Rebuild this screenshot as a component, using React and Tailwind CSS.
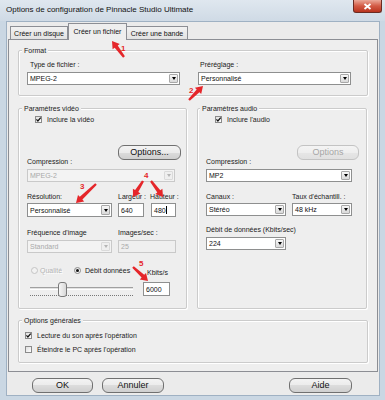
import React from "react";

function Select({ className = "", text, disabled }) {
  return (
    <div
      className={
        "flex items-stretch border " +
        (disabled ? "border-[#c9c9c9] bg-[#f3f3f3] " : "border-[#8e8f8f] bg-white ") +
        className
      }
    >
      <span
        className={
          "flex flex-1 items-center pl-[2px] text-[7px] leading-none " +
          (disabled ? "text-[#a9a9a9]" : "text-[#111]")
        }
      >
        {text}
      </span>
      <span
        className={
          "m-[1px] flex w-[9px] items-center justify-center rounded-[1px] border " +
          (disabled ? "border-[#dadada] bg-[#efefef]" : "border-[#a8a8a8] bg-[linear-gradient(#f7f7f7,#d9d9d9)]")
        }
      >
        <span
          className={
            "h-0 w-0 border-l-[2.5px] border-r-[2.5px] border-t-[3px] border-l-transparent border-r-transparent " +
            (disabled ? "border-t-[#b5b5b5]" : "border-t-black")
          }
        />
      </span>
    </div>
  );
}

function Input({ className = "", text, disabled, caret }) {
  return (
    <div
      className={
        "flex items-center border pl-[2px] text-[7px] leading-none " +
        (disabled ? "border-[#c9c9c9] bg-[#efefef] text-[#a9a9a9] " : "border-[#8e8f8f] bg-white text-[#111] ") +
        className
      }
    >
      {text}
      {caret && <span className="ml-[0.5px] h-[8px] w-[1px] bg-black" />}
    </div>
  );
}

function Check({ checked }) {
  return (
    <span className="flex h-[7px] w-[7px] shrink-0 items-center justify-center border border-[#8a8a8a] bg-[linear-gradient(135deg,#dedede,#ffffff)]">
      {checked && (
        <svg width="5" height="5" viewBox="0 0 5 5">
          <path d="M0.4 2.4 L1.9 4 L4.7 0.6" fill="none" stroke="#111" strokeWidth="1.2" />
        </svg>
      )}
    </span>
  );
}

function Radio({ checked, disabled }) {
  return (
    <span
      className={
        "flex h-[7px] w-[7px] shrink-0 items-center justify-center rounded-full border " +
        (disabled ? "border-[#c4c4c4] bg-[#f2f2f2]" : "border-[#8a8a8a] bg-[linear-gradient(135deg,#dedede,#ffffff)]")
      }
    >
      {checked && <span className="h-[3px] w-[3px] rounded-full bg-[#111]" />}
    </span>
  );
}

function Button({ className = "", children, disabled }) {
  return (
    <div
      className={
        "flex h-[15px] items-center justify-center rounded-[6px] border text-[9px] leading-none " +
        (disabled
          ? "border-[#c3c3c3] bg-[linear-gradient(#f4f4f4,#eeeeee_50%,#e6e6e6_50%,#e0e0e0)] text-[#a6a6a6] "
          : "border-[#707070] bg-[linear-gradient(#f3f3f3,#ebebeb_50%,#dcdcdc_50%,#cfcfcf)] text-[#111] ") +
        className
      }
    >
      {children}
    </div>
  );
}

function Legend({ className = "", children }) {
  return (
    <span className={"absolute -top-[5px] bg-[#eeeeee] px-[2px] text-[7px] leading-[9px] text-[#222] " + className}>
      {children}
    </span>
  );
}

const group =
  "relative rounded-[2px] border border-[#cbcbcb] shadow-[inset_1px_1px_0_#ffffff,1px_1px_0_#ffffff]";
const lbl = "text-[7px] leading-[9px] text-[#1a1a1a] whitespace-nowrap";

function arrowPts(x1, y1, x2, y2, sw = 3.8, hl = 7, hw = 9) {
  const dx = x2 - x1;
  const dy = y2 - y1;
  const L = Math.hypot(dx, dy);
  const ux = dx / L;
  const uy = dy / L;
  const px = -uy;
  const py = ux;
  const bx = x2 - ux * hl;
  const by = y2 - uy * hl;
  const pts = [
    [x1 + (px * sw * 0.6) / 2, y1 + (py * sw * 0.6) / 2],
    [bx + (px * sw) / 2, by + (py * sw) / 2],
    [bx + (px * hw) / 2, by + (py * hw) / 2],
    [x2, y2],
    [bx - (px * hw) / 2, by - (py * hw) / 2],
    [bx - (px * sw) / 2, by - (py * sw) / 2],
    [x1 - (px * sw * 0.6) / 2, y1 - (py * sw * 0.6) / 2],
  ];
  return pts.map((p) => p[0].toFixed(1) + "," + p[1].toFixed(1)).join(" ");
}

const arrows = [
  [124, 57, 112, 41],
  [189, 100, 203, 86],
  [96, 184, 76, 203],
  [143, 181, 133, 197],
  [151, 181, 163, 197],
  [133, 267, 148, 281],
];
const nums = [
  ["1", 121, 51],
  ["2", 189, 93],
  ["3", 80, 189],
  ["4", 144, 178],
  ["5", 139, 266],
];

export default function App() {
  return (
    <div className="relative h-[400px] w-[385px] overflow-hidden bg-[#cad7e3] font-['Liberation_Sans',Arial,sans-serif] text-[#111]">
      {/* title bar */}
      <div className="flex h-[21px] items-start justify-between bg-[linear-gradient(#dfe7ef,#cfdae5)]">
        <span className="pl-[6px] pt-[5px] text-[8px] leading-[10px] text-[#111]">
          Options de configuration de Pinnacle Studio Ultimate
        </span>
        <div className="mr-[3px] flex h-[13px] w-[29px] items-center justify-center rounded-b-[3px] border border-t-0 border-[#6b2b22] bg-[linear-gradient(#eba898,#d35a44_50%,#b9341f)]">
          <svg width="9" height="7" viewBox="0 0 9 7">
            <path d="M1.5 1 L7.5 6 M7.5 1 L1.5 6" stroke="white" strokeWidth="1.8" />
          </svg>
        </div>
      </div>

      {/* client */}
      <div className="ml-[6px] h-[375px] w-[374px] border border-[#9fb1c3] bg-[#ebebeb] px-[1px]">
        {/* tabs */}
        <div className="flex h-[17px] items-end pl-[2px]">
          <div className="flex h-[13px] w-[58px] items-center justify-center border border-b-0 border-[#8c8e94] bg-[linear-gradient(#f2f2f2,#e2e2e2)] text-[7px] leading-none">
            Créer un disque
          </div>
          <div className="relative z-10 -mb-[1px] flex h-[17px] w-[59px] items-start justify-center border border-b-0 border-[#8c8e94] bg-[#eeeeee] pt-[4px] text-[7px] leading-none">
            Créer un fichier
          </div>
          <div className="flex h-[13px] w-[61px] items-center justify-center border border-b-0 border-l-0 border-[#8c8e94] bg-[linear-gradient(#f2f2f2,#e2e2e2)] text-[7px] leading-none">
            Créer une bande
          </div>
        </div>

        {/* panel */}
        <div className="h-[333px] w-[370px] border border-[#8c8e94] bg-[#eeeeee] pl-[9px] pt-[10px]">
          {/* Format */}
          <div className={group + " h-[46px] w-[350px]"}>
            <Legend className="left-[3px]">Format</Legend>
            <div className="flex pl-[8px] pt-[9px]">
              <div className="w-[153px]">
                <div className={lbl + " pl-[3px]"}>Type de fichier :</div>
                <Select className="mt-[3px] h-[13px] w-[153px]" text="MPEG-2" />
              </div>
              <div className="ml-[18px] w-[153px]">
                <div className={lbl + " pl-[2px]"}>Préréglage :</div>
                <Select className="mt-[3px] h-[13px] w-[153px]" text="Personnalisé" />
              </div>
            </div>
          </div>

          {/* video / audio */}
          <div className="mt-[12px] flex gap-[10px]">
            {/* video */}
            <div className={group + " h-[201px] w-[169px]"}>
              <Legend className="left-[3px]">Paramètres vidéo</Legend>
              <div className="flex h-[9px] items-center pl-[16px] mt-[6px]">
                <Check checked />
                <span className={lbl + " ml-[5px]"}>Inclure la vidéo</span>
              </div>
              <div className="mt-[21px] flex items-start justify-between">
                <span className={lbl + " ml-[8px] mt-[12px]"}>Compression :</span>
                <Button className="mr-[5px] w-[63px]">Options...</Button>
              </div>
              <Select className="ml-[8px] mt-[3px] h-[13px] w-[148px]" text="MPEG-2" disabled />

              <div className="mt-[10px] flex pl-[8px]">
                <span className={lbl + " w-[91px]"}>Résolution:</span>
                <span className={lbl + " w-[32px]"}>Largeur :</span>
                <span className={lbl}>Hauteur :</span>
              </div>
              <div className="mt-[2px] flex pl-[8px]">
                <Select className="h-[14px] w-[85px]" text="Personnalisé" />
                <Input className="ml-[6px] h-[14px] w-[26px]" text="640" />
                <Input className="ml-[7px] h-[14px] w-[25px]" text="480" caret />
              </div>

              <div className="mt-[11px] flex pl-[8px]">
                <span className={lbl + " w-[91px]"}>Fréquence d'image</span>
                <span className={lbl}>Images/sec :</span>
              </div>
              <div className="mt-[3px] flex pl-[8px]">
                <Select className="h-[13px] w-[85px]" text="Standard" disabled />
                <Input className="ml-[6px] h-[13px] w-[58px]" text="25" disabled />
              </div>

              <div className="mt-[13px] flex items-start pl-[12px]">
                <span className="flex h-[9px] items-center">
                  <Radio disabled />
                </span>
                <span className={lbl + " ml-[2px] w-[34px] text-[#b4b4b4] [text-shadow:1px_1px_0_#ffffff]"}>Qualité</span>
                <span className="flex h-[9px] items-center">
                  <Radio checked />
                </span>
                <span className={lbl + " ml-[4px] w-[62px]"}>Débit données</span>
                <span className={lbl + " mt-[2px]"}>Kbits/s</span>
              </div>

              <div className="mt-[5px] flex items-start pl-[11px]">
                <div className="relative h-[15px] w-[103px]">
                  <div className="mt-[5px] h-[3px] border-b border-t border-b-white border-t-[#a0a0a0] bg-[#e2e2e2]" />
                  <div className="mt-[5px] h-0 border-t border-dotted border-[#777777]" />
                  <div className="absolute left-[28px] top-0 h-[15px] w-[9px] rounded-[3px] border border-[#7a7a7a] bg-[linear-gradient(90deg,#f6f6f6,#d8d8d8)]" />
                </div>
                <Input className="ml-[10px] h-[14px] w-[27px]" text="6000" />
              </div>
            </div>

            {/* audio */}
            <div className={group + " h-[201px] w-[170px]"}>
              <Legend className="left-[2px]">Paramètres audio</Legend>
              <div className="mt-[6px] flex h-[9px] items-center pl-[17px]">
                <Check checked />
                <span className={lbl + " ml-[5px]"}>Inclure l'audio</span>
              </div>
              <div className="mt-[21px] flex items-start justify-between">
                <span className={lbl + " ml-[8px] mt-[12px]"}>Compression :</span>
                <Button className="mr-[7px] w-[62px]" disabled>
                  Options
                </Button>
              </div>
              <Select className="ml-[8px] mt-[3px] h-[13px] w-[146px]" text="MP2" />

              <div className="mt-[10px] flex pl-[8px]">
                <span className={lbl + " w-[86px]"}>Canaux :</span>
                <span className={lbl}>Taux d'échantill. :</span>
              </div>
              <div className="mt-[2px] flex pl-[8px]">
                <Select className="h-[13px] w-[80px]" text="Stéréo" />
                <Select className="ml-[6px] h-[13px] w-[60px]" text="48 kHz" />
              </div>

              <div className={lbl + " mt-[9px] pl-[8px]"}>Débit de données (Kbits/sec)</div>
              <Select className="ml-[8px] mt-[3px] h-[13px] w-[80px]" text="224" />
            </div>
          </div>

          {/* options générales */}
          <div className={group + " mt-[11px] h-[43px] w-[350px]"}>
            <Legend className="left-[3px]">Options générales</Legend>
            <div className="mt-[10px] flex h-[9px] items-center pl-[6px]">
              <Check checked />
              <span className={lbl + " ml-[5px]"}>Lecture du son après l'opération</span>
            </div>
            <div className="mt-[5px] flex h-[9px] items-center pl-[6px]">
              <Check />
              <span className={lbl + " ml-[5px]"}>Éteindre le PC après l'opération</span>
            </div>
          </div>
        </div>

        {/* bottom buttons */}
        <div className="mt-[6px] flex pl-[24px]">
          <Button className="w-[61px]">OK</Button>
          <Button className="ml-[9px] w-[62px]">Annuler</Button>
          <Button className="ml-[125px] w-[63px]">Aide</Button>
        </div>
      </div>

      {/* red annotations */}
      <svg className="pointer-events-none absolute left-0 top-0" width="385" height="400" viewBox="0 0 385 400">
        {arrows.map((a, i) => (
          <polygon key={i} points={arrowPts(a[0], a[1], a[2], a[3])} fill="#e5262a" />
        ))}
        {nums.map((n, i) => (
          <text
            key={i}
            x={n[1]}
            y={n[2]}
            fill="#e5262a"
            fontSize="8"
            fontWeight="bold"
            fontFamily="'Liberation Sans', Arial, sans-serif"
          >
            {n[0]}
          </text>
        ))}
      </svg>
    </div>
  );
}
